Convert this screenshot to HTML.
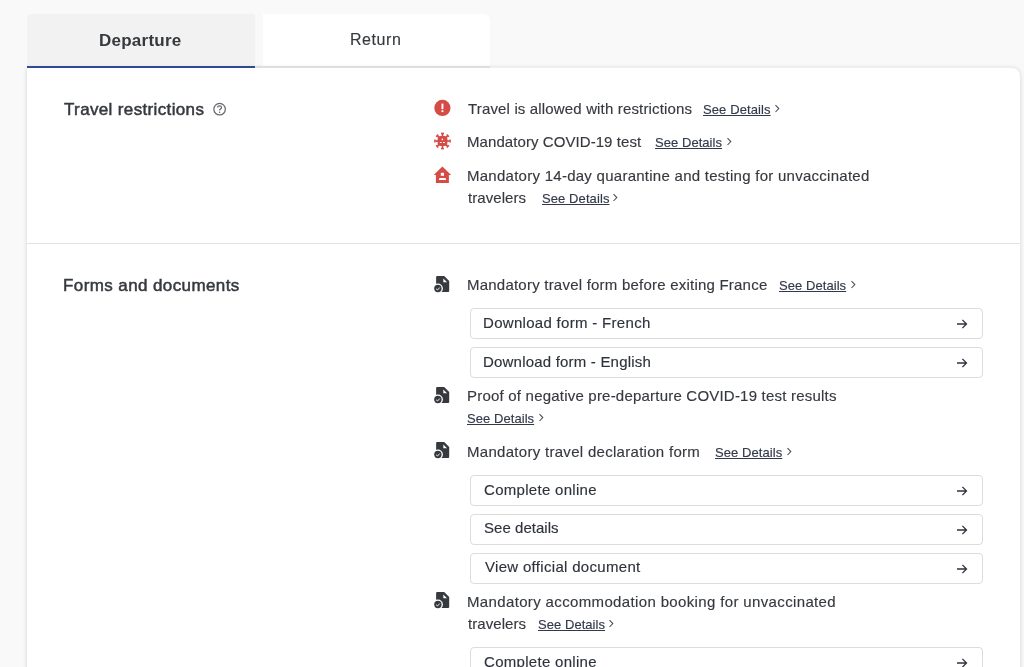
<!DOCTYPE html>
<html><head><meta charset="utf-8"><style>
html,body{margin:0;padding:0;}
body{width:1024px;height:667px;overflow:hidden;position:relative;background:#f9f9f9;font-family:"Liberation Sans",sans-serif;}
.t{position:absolute;white-space:pre;line-height:normal;will-change:transform;}
.i{position:absolute;display:block;}
.tab{position:absolute;top:14px;height:52px;}
#tab1{left:27px;width:228px;background:#f2f2f2;border-radius:5px 0 0 0;}
#tab2{left:263px;width:227px;background:#fff;border-radius:0 6px 0 0;}
#blue{position:absolute;left:27px;top:66px;width:228px;height:2px;background:#2f4c92;}
#gline{position:absolute;left:255px;top:66px;width:235px;height:2px;background:#dedede;}
#card{position:absolute;left:27px;top:68px;width:993px;height:700px;background:#fff;border-radius:0 8px 0 0;box-shadow:0 0 4px rgba(0,0,0,0.16);}
#gline2{position:absolute;left:490px;top:66px;width:522px;height:2px;background:#eeeeee;}
#div1{position:absolute;left:27px;top:243px;width:993px;height:1px;background:#e3e3e3;}
.box{position:absolute;left:470px;width:511px;height:29px;border:1px solid #dcdcdc;border-radius:4px;background:#fff;}
</style></head><body>
<div class="tab" id="tab1"></div>
<div class="tab" id="tab2"></div>
<div id="card"></div>
<div id="blue"></div>
<div id="gline"></div><div id="gline2"></div>
<div id="div1"></div>
<div class="box" style="top:308px"></div><svg class="i" style="left:954px;top:317.0px" width="16" height="14" viewBox="0 0 16 14"><path d="M3 7 H12.4 M8.4 2.9 L12.5 7 L8.4 11.1" fill="none" stroke="#2f333b" stroke-width="1.3"/></svg><div class="box" style="top:347px"></div><svg class="i" style="left:954px;top:356.0px" width="16" height="14" viewBox="0 0 16 14"><path d="M3 7 H12.4 M8.4 2.9 L12.5 7 L8.4 11.1" fill="none" stroke="#2f333b" stroke-width="1.3"/></svg><div class="box" style="top:474.5px"></div><svg class="i" style="left:954px;top:483.5px" width="16" height="14" viewBox="0 0 16 14"><path d="M3 7 H12.4 M8.4 2.9 L12.5 7 L8.4 11.1" fill="none" stroke="#2f333b" stroke-width="1.3"/></svg><div class="box" style="top:513.5px"></div><svg class="i" style="left:954px;top:522.5px" width="16" height="14" viewBox="0 0 16 14"><path d="M3 7 H12.4 M8.4 2.9 L12.5 7 L8.4 11.1" fill="none" stroke="#2f333b" stroke-width="1.3"/></svg><div class="box" style="top:552.5px"></div><svg class="i" style="left:954px;top:561.5px" width="16" height="14" viewBox="0 0 16 14"><path d="M3 7 H12.4 M8.4 2.9 L12.5 7 L8.4 11.1" fill="none" stroke="#2f333b" stroke-width="1.3"/></svg><div class="box" style="top:647px"></div><svg class="i" style="left:954px;top:656.0px" width="16" height="14" viewBox="0 0 16 14"><path d="M3 7 H12.4 M8.4 2.9 L12.5 7 L8.4 11.1" fill="none" stroke="#2f333b" stroke-width="1.3"/></svg>
<svg class="i" style="left:428px;top:95px" width="30" height="30" viewBox="0 0 30 30">
<circle cx="14.4" cy="12.9" r="8.1" fill="#d44c45"/>
<rect x="13.5" y="8.6" width="1.9" height="5.6" fill="#fff"/>
<rect x="13.5" y="15.3" width="1.9" height="1.8" fill="#fff"/>
</svg><svg class="i" style="left:428px;top:127px" width="30" height="30" viewBox="0 0 30 30">
<line x1="18.50" y1="14.00" x2="21.70" y2="14.00" stroke="#d44c45" stroke-width="1.7"/><line x1="22.10" y1="12.50" x2="22.10" y2="15.50" stroke="#d44c45" stroke-width="1.5"/><line x1="17.33" y1="16.83" x2="19.59" y2="19.09" stroke="#d44c45" stroke-width="1.7"/><line x1="20.93" y1="18.31" x2="18.81" y2="20.43" stroke="#d44c45" stroke-width="1.5"/><line x1="14.50" y1="18.00" x2="14.50" y2="21.20" stroke="#d44c45" stroke-width="1.7"/><line x1="16.00" y1="21.60" x2="13.00" y2="21.60" stroke="#d44c45" stroke-width="1.5"/><line x1="11.67" y1="16.83" x2="9.41" y2="19.09" stroke="#d44c45" stroke-width="1.7"/><line x1="10.19" y1="20.43" x2="8.07" y2="18.31" stroke="#d44c45" stroke-width="1.5"/><line x1="10.50" y1="14.00" x2="7.30" y2="14.00" stroke="#d44c45" stroke-width="1.7"/><line x1="6.90" y1="15.50" x2="6.90" y2="12.50" stroke="#d44c45" stroke-width="1.5"/><line x1="11.67" y1="11.17" x2="9.41" y2="8.91" stroke="#d44c45" stroke-width="1.7"/><line x1="8.07" y1="9.69" x2="10.19" y2="7.57" stroke="#d44c45" stroke-width="1.5"/><line x1="14.50" y1="10.00" x2="14.50" y2="6.80" stroke="#d44c45" stroke-width="1.7"/><line x1="13.00" y1="6.40" x2="16.00" y2="6.40" stroke="#d44c45" stroke-width="1.5"/><line x1="17.33" y1="11.17" x2="19.59" y2="8.91" stroke="#d44c45" stroke-width="1.7"/><line x1="18.81" y1="7.57" x2="20.93" y2="9.69" stroke="#d44c45" stroke-width="1.5"/>
<rect x="9.6" y="9.1" width="9.8" height="9.8" rx="3" fill="#d44c45"/>
<circle cx="14.4" cy="12.4" r="0.8" fill="#fff"/>
<rect x="11.9" y="15" width="1.8" height="1" fill="#fff"/>
<rect x="15.1" y="15" width="1.8" height="1" fill="#fff"/>
</svg><svg class="i" style="left:428px;top:160px" width="30" height="30" viewBox="0 0 30 30">
<path d="M14.4 6.6 L5.7 14.9 H7.9 V23 H20.9 V14.9 H23.1 Z" fill="#d44c45"/>
<rect x="12.8" y="12.8" width="3.2" height="3.0" fill="#fff"/>
<path d="M11 19.9 V19 Q11 17.9 12.5 17.9 H16.5 Q18 17.9 18 19 V19.9 Z" fill="#fff"/>
</svg><svg class="i" style="left:205px;top:100px" width="30" height="20" viewBox="0 0 30 20">
<circle cx="14.6" cy="9.2" r="5.75" fill="none" stroke="#66696e" stroke-width="1.25"/>
<path d="M12.6 7.6 Q12.6 5.9 14.6 5.9 Q16.5 5.9 16.5 7.5 Q16.5 8.5 15.4 9.1 Q14.6 9.6 14.6 10.6" fill="none" stroke="#66696e" stroke-width="1.2"/>
<circle cx="14.6" cy="12.2" r="0.75" fill="#66696e"/>
</svg>
<svg class="i" style="left:428px;top:270.0px" width="30" height="30" viewBox="0 0 30 30">
<path d="M9.1 5.9 H16.2 L21.2 10.9 V21.1 Q21.2 22.1 20.2 22.1 H9.1 Q8.1 22.1 8.1 21.1 V6.9 Q8.1 5.9 9.1 5.9 Z" fill="#36393e"/>
<path d="M15.3 8.4 L15.3 12.2 L19.1 12.2 Z" fill="#fff"/>
<circle cx="9.9" cy="18.5" r="5.0" fill="#fff"/>
<circle cx="9.9" cy="18.5" r="3.7" fill="#36393e"/>
<path d="M8.1 18.8 L9.5 20 L11.8 17.5" fill="none" stroke="#fff" stroke-width="0.9"/>
</svg><svg class="i" style="left:428px;top:381.1px" width="30" height="30" viewBox="0 0 30 30">
<path d="M9.1 5.9 H16.2 L21.2 10.9 V21.1 Q21.2 22.1 20.2 22.1 H9.1 Q8.1 22.1 8.1 21.1 V6.9 Q8.1 5.9 9.1 5.9 Z" fill="#36393e"/>
<path d="M15.3 8.4 L15.3 12.2 L19.1 12.2 Z" fill="#fff"/>
<circle cx="9.9" cy="18.5" r="5.0" fill="#fff"/>
<circle cx="9.9" cy="18.5" r="3.7" fill="#36393e"/>
<path d="M8.1 18.8 L9.5 20 L11.8 17.5" fill="none" stroke="#fff" stroke-width="0.9"/>
</svg><svg class="i" style="left:428px;top:436.4px" width="30" height="30" viewBox="0 0 30 30">
<path d="M9.1 5.9 H16.2 L21.2 10.9 V21.1 Q21.2 22.1 20.2 22.1 H9.1 Q8.1 22.1 8.1 21.1 V6.9 Q8.1 5.9 9.1 5.9 Z" fill="#36393e"/>
<path d="M15.3 8.4 L15.3 12.2 L19.1 12.2 Z" fill="#fff"/>
<circle cx="9.9" cy="18.5" r="5.0" fill="#fff"/>
<circle cx="9.9" cy="18.5" r="3.7" fill="#36393e"/>
<path d="M8.1 18.8 L9.5 20 L11.8 17.5" fill="none" stroke="#fff" stroke-width="0.9"/>
</svg><svg class="i" style="left:428px;top:586.4px" width="30" height="30" viewBox="0 0 30 30">
<path d="M9.1 5.9 H16.2 L21.2 10.9 V21.1 Q21.2 22.1 20.2 22.1 H9.1 Q8.1 22.1 8.1 21.1 V6.9 Q8.1 5.9 9.1 5.9 Z" fill="#36393e"/>
<path d="M15.3 8.4 L15.3 12.2 L19.1 12.2 Z" fill="#fff"/>
<circle cx="9.9" cy="18.5" r="5.0" fill="#fff"/>
<circle cx="9.9" cy="18.5" r="3.7" fill="#36393e"/>
<path d="M8.1 18.8 L9.5 20 L11.8 17.5" fill="none" stroke="#fff" stroke-width="0.9"/>
</svg>
<svg class="i" style="left:773.7px;top:102.6px" width="7" height="11" viewBox="0 0 7 11"><path d="M1.5 2.2 L4.8 5.6 L1.5 9" fill="none" stroke="#4a4d52" stroke-width="1.05"/></svg><svg class="i" style="left:725.6px;top:136.2px" width="7" height="11" viewBox="0 0 7 11"><path d="M1.5 2.2 L4.8 5.6 L1.5 9" fill="none" stroke="#4a4d52" stroke-width="1.05"/></svg><svg class="i" style="left:612.4px;top:191.6px" width="7" height="11" viewBox="0 0 7 11"><path d="M1.5 2.2 L4.8 5.6 L1.5 9" fill="none" stroke="#4a4d52" stroke-width="1.05"/></svg><svg class="i" style="left:849.7px;top:278.6px" width="7" height="11" viewBox="0 0 7 11"><path d="M1.5 2.2 L4.8 5.6 L1.5 9" fill="none" stroke="#4a4d52" stroke-width="1.05"/></svg><svg class="i" style="left:537.6px;top:412.0px" width="7" height="11" viewBox="0 0 7 11"><path d="M1.5 2.2 L4.8 5.6 L1.5 9" fill="none" stroke="#4a4d52" stroke-width="1.05"/></svg><svg class="i" style="left:786.0px;top:445.7px" width="7" height="11" viewBox="0 0 7 11"><path d="M1.5 2.2 L4.8 5.6 L1.5 9" fill="none" stroke="#4a4d52" stroke-width="1.05"/></svg><svg class="i" style="left:608.0px;top:618.0px" width="7" height="11" viewBox="0 0 7 11"><path d="M1.5 2.2 L4.8 5.6 L1.5 9" fill="none" stroke="#4a4d52" stroke-width="1.05"/></svg>
<div class="t" style="left:98.8px;top:30.5px;font-size:17px;font-weight:700;letter-spacing:0.250px;color:#36393e;">Departure</div>
<div class="t" style="left:350.3px;top:31.4px;font-size:16px;font-weight:400;letter-spacing:0.560px;color:#36393e;-webkit-text-stroke:0.15px #36393e;">Return</div>
<div class="t" style="left:64.1px;top:99.7px;font-size:17px;font-weight:400;letter-spacing:0.356px;color:#36393e;-webkit-text-stroke:0.5px #36393e;">Travel restrictions</div>
<div class="t" style="left:468.3px;top:99.6px;font-size:15px;font-weight:400;letter-spacing:0.156px;color:#36393e;-webkit-text-stroke:0.15px #36393e;">Travel is allowed with restrictions</div>
<div class="t" style="left:703.0px;top:101.6px;font-size:13px;font-weight:400;letter-spacing:0.100px;color:#33384a;-webkit-text-stroke:0.15px #33384a;text-decoration:underline;text-underline-offset:1px;">See Details</div>
<div class="t" style="left:467.2px;top:133.2px;font-size:15px;font-weight:400;letter-spacing:0.073px;color:#36393e;-webkit-text-stroke:0.15px #36393e;">Mandatory COVID-19 test</div>
<div class="t" style="left:654.5px;top:135.2px;font-size:13px;font-weight:400;letter-spacing:0.050px;color:#33384a;-webkit-text-stroke:0.15px #33384a;text-decoration:underline;text-underline-offset:1px;">See Details</div>
<div class="t" style="left:467.0px;top:166.8px;font-size:15px;font-weight:400;letter-spacing:0.264px;color:#36393e;-webkit-text-stroke:0.15px #36393e;">Mandatory 14-day quarantine and testing for unvaccinated</div>
<div class="t" style="left:468.4px;top:188.6px;font-size:15px;font-weight:400;letter-spacing:0.062px;color:#36393e;-webkit-text-stroke:0.15px #36393e;">travelers</div>
<div class="t" style="left:541.6px;top:190.6px;font-size:13px;font-weight:400;letter-spacing:0.090px;color:#33384a;-webkit-text-stroke:0.15px #33384a;text-decoration:underline;text-underline-offset:1px;">See Details</div>
<div class="t" style="left:63.4px;top:275.5px;font-size:17px;font-weight:400;letter-spacing:0.400px;color:#36393e;-webkit-text-stroke:0.5px #36393e;">Forms and documents</div>
<div class="t" style="left:467.3px;top:275.6px;font-size:15px;font-weight:400;letter-spacing:0.221px;color:#36393e;-webkit-text-stroke:0.15px #36393e;">Mandatory travel form before exiting France</div>
<div class="t" style="left:779.0px;top:277.6px;font-size:13px;font-weight:400;letter-spacing:0.060px;color:#33384a;-webkit-text-stroke:0.15px #33384a;text-decoration:underline;text-underline-offset:1px;">See Details</div>
<div class="t" style="left:483.4px;top:314.0px;font-size:15px;font-weight:400;letter-spacing:0.305px;color:#2e323b;-webkit-text-stroke:0.15px #2e323b;">Download form - French</div>
<div class="t" style="left:483.4px;top:352.6px;font-size:15px;font-weight:400;letter-spacing:0.200px;color:#2e323b;-webkit-text-stroke:0.15px #2e323b;">Download form - English</div>
<div class="t" style="left:467.3px;top:387.1px;font-size:15px;font-weight:400;letter-spacing:0.210px;color:#36393e;-webkit-text-stroke:0.15px #36393e;">Proof of negative pre-departure COVID-19 test results</div>
<div class="t" style="left:466.8px;top:411.0px;font-size:13px;font-weight:400;letter-spacing:0.060px;color:#33384a;-webkit-text-stroke:0.15px #33384a;text-decoration:underline;text-underline-offset:1px;">See Details</div>
<div class="t" style="left:467.3px;top:442.7px;font-size:15px;font-weight:400;letter-spacing:0.294px;color:#36393e;-webkit-text-stroke:0.15px #36393e;">Mandatory travel declaration form</div>
<div class="t" style="left:715.3px;top:444.7px;font-size:13px;font-weight:400;letter-spacing:0.070px;color:#33384a;-webkit-text-stroke:0.15px #33384a;text-decoration:underline;text-underline-offset:1px;">See Details</div>
<div class="t" style="left:483.7px;top:480.7px;font-size:15px;font-weight:400;letter-spacing:0.300px;color:#2e323b;-webkit-text-stroke:0.15px #2e323b;">Complete online</div>
<div class="t" style="left:483.7px;top:519.4px;font-size:15px;font-weight:400;letter-spacing:0.040px;color:#2e323b;-webkit-text-stroke:0.15px #2e323b;">See details</div>
<div class="t" style="left:484.7px;top:558.0px;font-size:15px;font-weight:400;letter-spacing:0.310px;color:#2e323b;-webkit-text-stroke:0.15px #2e323b;">View official document</div>
<div class="t" style="left:467.3px;top:593.1px;font-size:15px;font-weight:400;letter-spacing:0.357px;color:#36393e;-webkit-text-stroke:0.15px #36393e;">Mandatory accommodation booking for unvaccinated</div>
<div class="t" style="left:468.3px;top:615.0px;font-size:15px;font-weight:400;letter-spacing:0.062px;color:#36393e;-webkit-text-stroke:0.15px #36393e;">travelers</div>
<div class="t" style="left:537.8px;top:617.0px;font-size:13px;font-weight:400;letter-spacing:0.050px;color:#33384a;-webkit-text-stroke:0.15px #33384a;text-decoration:underline;text-underline-offset:1px;">See Details</div>
<div class="t" style="left:483.7px;top:653.2px;font-size:15px;font-weight:400;letter-spacing:0.300px;color:#2e323b;-webkit-text-stroke:0.15px #2e323b;">Complete online</div>
</body></html>
